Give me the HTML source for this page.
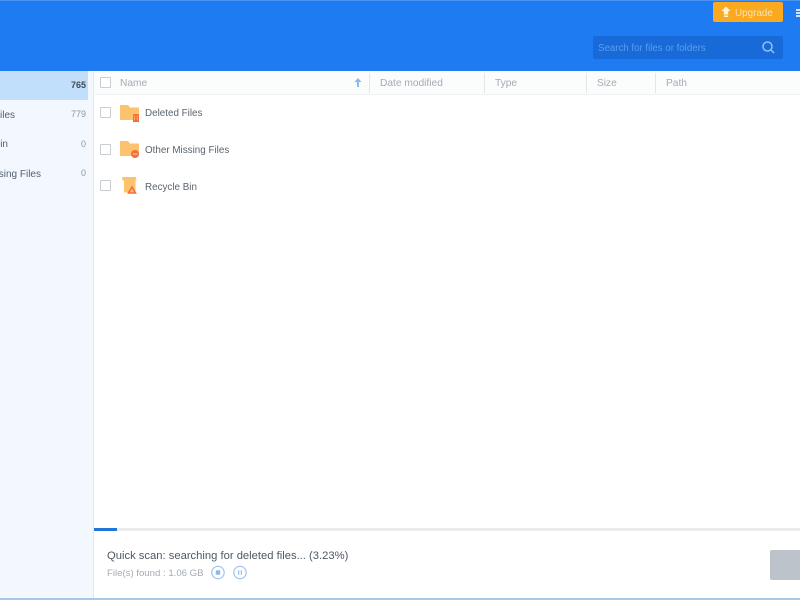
<!DOCTYPE html>
<html><head><meta charset="utf-8">
<style>
html,body{margin:0;padding:0;width:800px;height:600px;overflow:hidden;background:#fff;font-family:"Liberation Sans",sans-serif}
.a{position:absolute;white-space:nowrap}
.side{font-size:10px;color:#55606c;line-height:12px}
.cnt{font-size:9px;color:#8c96a0;line-height:12px}
.hd{font-size:10.2px;color:#a3abb4;line-height:12px;top:78px}
.sep{position:absolute;top:73px;width:1px;height:20px;background:#e3e6ea}
.cb{position:absolute;left:100px;width:9px;height:9px;border:1px solid #c9ced4;background:#fff;border-radius:1px}
.row{font-size:9.85px;color:#5b646e;line-height:12px;left:145px}
</style></head><body>
<div class="a" style="left:0;top:0;width:800px;height:71px;background:#1f7bf2"></div>
<div class="a" style="left:0;top:0;width:800px;height:1px;background:#4a94f5"></div>
<div class="a" style="left:713px;top:2px;width:70px;height:20px;background:#fba91e;border-radius:2px"></div>
<svg class="a" style="left:720px;top:6px" width="12" height="12" viewBox="0 0 12 12"><path d="M6 0.5L10.5 5H8.2V8.5H3.8V5H1.5Z M3.8 9.5H8.2V11H3.8Z" fill="#fff3d8"/></svg>
<div class="a" style="left:735px;top:7px;font-size:9.9px;line-height:13px;color:#fde3b0">Upgrade</div>
<div class="a" style="left:796px;top:9px;width:4px;height:1.5px;background:#cfe3fc"></div>
<div class="a" style="left:796px;top:12px;width:4px;height:1.5px;background:#cfe3fc"></div>
<div class="a" style="left:796px;top:15px;width:4px;height:1.5px;background:#cfe3fc"></div>
<div class="a" style="left:593px;top:36px;width:190px;height:23px;background:#176ad8;border-radius:2px"></div>
<div class="a" style="left:598px;top:42px;font-size:9.7px;line-height:14px;color:#5b9cee">Search for files or folders</div>
<svg class="a" style="left:761px;top:40px" width="14" height="14" viewBox="0 0 14 14"><circle cx="6.5" cy="6.5" r="4.5" fill="none" stroke="#8fc0f6" stroke-width="1.5"/><path d="M10 10L13 13" stroke="#8fc0f6" stroke-width="1.5"/></svg>

<div class="a" style="left:0;top:71px;width:93px;height:529px;background:#f3f8fe;border-right:1px solid #e2e8f0;overflow:hidden">
<div class="a" style="left:0;top:0;width:88px;height:29px;background:#c1defb"></div>
<div class="a cnt" style="left:71px;top:8px;color:#3f4a56;font-weight:bold">765</div>
<div class="a side" style="right:78px;top:39px">Deleted Files</div>
<div class="a cnt" style="left:71px;top:37px">779</div>
<div class="a side" style="right:85px;top:68px">Recycle Bin</div>
<div class="a cnt" style="left:81px;top:67px">0</div>
<div class="a side" style="right:52px;top:98px">Other Missing Files</div>
<div class="a cnt" style="left:81px;top:96px">0</div>
</div>

<div class="a" style="left:94px;top:71px;width:706px;height:24px;background:#fbfcfc;border-bottom:1px solid #eff1f3;box-sizing:border-box"></div>
<div class="cb" style="top:77px"></div>
<div class="a hd" style="left:120px">Name</div>
<svg class="a" style="left:354px;top:78px" width="8" height="9" viewBox="0 0 8 9"><path d="M4 0L7.5 4H5V9H3V4H0.5Z" fill="#8db8ea"/></svg>
<div class="sep" style="left:369px"></div>
<div class="a hd" style="left:380px">Date modified</div>
<div class="sep" style="left:484px"></div>
<div class="a hd" style="left:495px">Type</div>
<div class="sep" style="left:586px"></div>
<div class="a hd" style="left:597px">Size</div>
<div class="sep" style="left:655px"></div>
<div class="a hd" style="left:666px">Path</div>

<div class="cb" style="top:107px"></div>
<svg class="a" style="left:120px;top:104px" width="20" height="19" viewBox="0 0 20 19"><path d="M0 1H8L10 3.5H19V16H0Z" fill="#fdc26e"/><path d="M13 9.5H19V18H13Z" fill="#f2703a"/><path d="M12.5 9.7H19.5M14.7 11.5V16M17.2 11.5V16" stroke="#fdc26e" stroke-width=".7" fill="none"/></svg>
<div class="a row" style="top:108px">Deleted Files</div>

<div class="cb" style="top:144px"></div>
<svg class="a" style="left:120px;top:140px" width="20" height="19" viewBox="0 0 20 19"><path d="M0 1H8L10 3.5H19V16H0Z" fill="#fdc26e"/><circle cx="15" cy="14" r="4" fill="#f2703a"/><path d="M12.7 14H17.3" stroke="#fdd9a8" stroke-width="1"/></svg>
<div class="a row" style="top:145px">Other Missing Files</div>

<div class="cb" style="top:180px"></div>
<svg class="a" style="left:120px;top:176px" width="20" height="19" viewBox="0 0 20 19"><path d="M2 1H16L16.5 4.5H15.5V16.5H4V4.5H2.5Z" fill="#fdc26e"/><path d="M12 11L15.5 17H8.5Z" fill="none" stroke="#f2703a" stroke-width="1.6"/></svg>
<div class="a row" style="top:182px">Recycle Bin</div>

<div class="a" style="left:94px;top:528px;width:706px;height:3px;background:#e9ebed"></div>
<div class="a" style="left:94px;top:528px;width:23px;height:3px;background:#2275d8"></div>
<div class="a" style="left:107px;top:549px;font-size:11.23px;line-height:14px;color:#4f5862">Quick scan: searching for deleted files... (3.23%)</div>
<div class="a" style="left:107px;top:568px;font-size:9.6px;line-height:12px;color:#a3abb3">File(s) found : 1.06 GB</div>
<svg class="a" style="left:210px;top:565px" width="16" height="15" viewBox="0 0 16 15"><circle cx="8" cy="7.5" r="6.2" fill="none" stroke="#9fc3ea" stroke-width="1.2"/><rect x="5.8" y="5.3" width="4.4" height="4.4" fill="#8db8e6"/></svg>
<svg class="a" style="left:232px;top:565px" width="16" height="15" viewBox="0 0 16 15"><circle cx="8" cy="7.5" r="6.2" fill="none" stroke="#9fc3ea" stroke-width="1.2"/><path d="M6.7 5.3V9.7M9.3 5.3V9.7" stroke="#8db8e6" stroke-width="1.1"/></svg>
<div class="a" style="left:770px;top:550px;width:30px;height:30px;background:#bcc3cb;border-radius:2px 0 0 2px"></div>
<div class="a" style="left:0;top:598px;width:800px;height:2px;background:#a9c8e6"></div>
</body></html>
